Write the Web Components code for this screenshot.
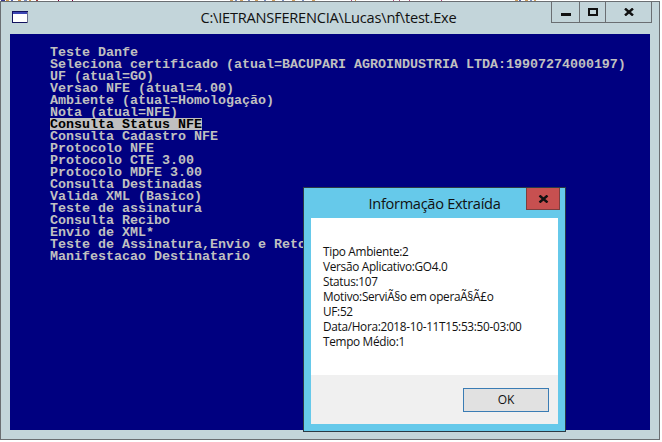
<!DOCTYPE html>
<html>
<head>
<meta charset="utf-8">
<title>test.Exe</title>
<style>
html, body { margin: 0; padding: 0; background: #fff; }
body { width: 662px; height: 442px; overflow: hidden; }
</style>
</head>
<body>
<top-strip></top-strip>
<console-window title-text="C:\IETRANSFERENCIA\Lucas\nf\test.Exe">
  <menu-line>Teste Danfe</menu-line>
  <menu-line>Seleciona certificado (atual=BACUPARI AGROINDUSTRIA LTDA:19907274000197)</menu-line>
  <menu-line>UF (atual=GO)</menu-line>
  <menu-line>Versao NFE (atual=4.00)</menu-line>
  <menu-line>Ambiente (atual=Homologação)</menu-line>
  <menu-line>Nota (atual=NFE)</menu-line>
  <menu-line selected>Consulta Status NFE</menu-line>
  <menu-line>Consulta Cadastro NFE</menu-line>
  <menu-line>Protocolo NFE</menu-line>
  <menu-line>Protocolo CTE 3.00</menu-line>
  <menu-line>Protocolo MDFE 3.00</menu-line>
  <menu-line>Consulta Destinadas</menu-line>
  <menu-line>Valida XML (Basico)</menu-line>
  <menu-line>Teste de assinatura</menu-line>
  <menu-line>Consulta Recibo</menu-line>
  <menu-line>Envio de XML*</menu-line>
  <menu-line>Teste de Assinatura,Envio e Retorno</menu-line>
  <menu-line>Manifestacao Destinatario</menu-line>
  <message-box slot="dialog" title-text="Informação Extraída">
    <div>Tipo Ambiente:2</div>
    <div>Versão Aplicativo:GO4.0</div>
    <div>Status:107</div>
    <div>Motivo:ServiÃ§o em operaÃ§Ã£o</div>
    <div>UF:52</div>
    <div>Data/Hora:2018-10-11T15:53:50-03:00</div>
    <div>Tempo Médio:1</div>
  </message-box>
</console-window>

<script>
(function() {

  const UI_FONT = '"Open Sans", "Noto Sans", sans-serif';

  // bits of the windows behind, they show in the first pixel row
  const STRIP_MARKS = [
    [1, 4, '#3a3a90'], [6, 3, '#d09a50'], [11, 2, '#5a6ab0'], [18, 3, '#c89050'],
    [24, 3, '#7a90c0'], [29, 2, '#d09a50'], [36, 2, '#a04040'],
    [58, 1, '#800040'], [72, 1, '#800040'],
    [230, 3, '#d0a060'], [235, 2, '#7a90c0'], [240, 3, '#d0a060'], [248, 2, '#7a90c0'],
    [255, 3, '#d0a060'], [264, 2, '#7a90c0'], [272, 3, '#d0a060'], [282, 2, '#7a90c0'],
    [292, 3, '#d0a060'], [302, 2, '#7a90c0'], [312, 3, '#d0a060'],
    [351, 1, '#b05080'], [355, 1, '#d09a50'],
    [393, 1, '#b05080'], [399, 1, '#b05080'], [409, 1, '#b05080'], [441, 1, '#b05080'],
    [515, 3, '#d0a060'], [519, 2, '#5a6ab0'], [525, 3, '#d0a060'], [530, 2, '#7a90c0'], [534, 2, '#d0a060']
  ];

  class TopStrip extends HTMLElement {
    constructor() {
      super();
      this.attachShadow({mode: 'open'});
      let stops = STRIP_MARKS.map(([x, w, c]) =>
        `#fff ${x}px, ${c} ${x}px, ${c} ${x + w}px, #fff ${x + w}px`).join(', ');
      this.shadowRoot.innerHTML = `<style>
:host {
  display: block;
  height: 1px;
  background: linear-gradient(to right, ${stops});
}
</style>`;
    }
  }

  class ConsoleWindow extends HTMLElement {
    constructor() {
      super();
      this.attachShadow({mode: 'open'});
      this.shadowRoot.innerHTML = `
<style>
:host {
  display: block;
  position: relative;
  box-sizing: border-box;
  width: 660px;
  height: 439px;
  background: #c3d5da;
  border: 1px solid #6a6e72;
}
.bar {
  height: 32px;
  display: flex;
  align-items: flex-start;
}
.icon {
  margin: 9px 0 0 11px;
  width: 16px;
  height: 12px;
  flex: none;
}
.title {
  flex: 1;
  margin-top: 4px;
  text-align: center;
  font: 14.6px/22px ${UI_FONT};
  color: #111;
  padding-left: 78px;
  letter-spacing: -0.22px;
}
.buttons {
  display: flex;
  box-sizing: border-box;
  height: 21px;
  margin-right: 7px;
  border: 1px solid #6a6e72;
  border-top: 0;
  flex: none;
}
.buttons div {
  display: flex;
  align-items: center;
  justify-content: center;
  box-sizing: border-box;
  height: 100%;
}
.buttons div + div { border-left: 1px solid #6a6e72; }
.min { width: 27px; }
.min svg { margin-top: 5px; }
.max { width: 26px; }
.close { width: 46px; }
.screen {
  margin: 0 9px 9px 9px;
  height: 396px;
  box-sizing: border-box;
  background: #000080;
  padding: 12px 0 0 40px;
}
</style>
<div class="bar">
  <svg class="icon" viewBox="0 0 16 12">
    <rect x="0.5" y="0.5" width="15" height="11" fill="#fff" stroke="#12125e"/>
    <rect x="1" y="1" width="14" height="2" fill="#3c46b4"/>
    <rect x="15" y="1" width="1" height="11" fill="#6a6e8c"/>
  </svg>
  <div class="title"></div>
  <div class="buttons">
    <div class="min"><svg width="10" height="3"><rect width="10" height="3" fill="#111"/></svg></div>
    <div class="max"><svg width="10" height="8"><rect x="1" y="1" width="8" height="6" fill="none" stroke="#111" stroke-width="2"/></svg></div>
    <div class="close"><svg width="10" height="8"><path d="M1 0.5 9 7.5M9 0.5 1 7.5" stroke="#111" stroke-width="2.4" fill="none"/></svg></div>
  </div>
</div>
<div class="screen"><slot></slot></div>
<slot name="dialog"></slot>
`;
      this.shadowRoot.querySelector('.title').textContent = this.getAttribute('title-text');
    }
  }

  class MenuLine extends HTMLElement {
    constructor() {
      super();
      this.attachShadow({mode: 'open'});
      this.shadowRoot.innerHTML = `
<style>
:host {
  display: block;
  height: 12px;
  font: bold 13.33px/14px "Liberation Mono", monospace;
  color: #c0c0c0;
}
:host([selected]) span {
  background: #c0c0c0;
  color: #000;
}
span { display: inline-block; height: 12px; white-space: pre; vertical-align: top; }
</style>
<span><slot></slot></span>
`;
    }
  }

  class MessageBox extends HTMLElement {
    constructor() {
      super();
      this.attachShadow({mode: 'open'});
      this.shadowRoot.innerHTML = `
<style>
:host {
  display: flex;
  flex-direction: column;
  position: absolute;
  left: 302px;
  top: 185px;
  box-sizing: border-box;
  width: 263px;
  height: 245px;
  background: #66c9ea;
  border: 1px solid #2b3a44;
  padding: 0 7px 7px 7px;
}
.head {
  height: 30px;
  position: relative;
  flex: none;
  text-align: center;
  font: 14.6px/30px ${UI_FONT};
  color: #111;
  letter-spacing: -0.3px;
}
.close {
  position: absolute;
  right: -2px;
  top: 0;
  width: 34px;
  height: 22px;
  box-sizing: border-box;
  background: #c75050;
  border: 1px solid #7b3f3f;
  border-top: 0;
  display: flex;
  align-items: center;
  justify-content: center;
}
.body {
  flex: 1;
  background: #fff;
  padding: 26px 0 0 12px;
  font: 11.8px/15px ${UI_FONT};
  color: #111;
  letter-spacing: -0.3px;
}
.foot {
  flex: none;
  height: 49px;
  box-sizing: border-box;
  background: #f0f0f0;
  display: flex;
  justify-content: flex-end;
  align-items: flex-start;
  padding: 13px 9px 0 0;
}
.ok {
  width: 86px;
  height: 24px;
  box-sizing: border-box;
  background: #e1e1e1;
  border: 1px solid #3a7cb4;
  font: 12px/22px ${UI_FONT};
  color: #111;
  text-align: center;
}
</style>
<div class="head"><span class="t"></span>
  <div class="close"><svg width="11" height="8"><path d="M1.5 0.5 9.5 7.5M9.5 0.5 1.5 7.5" stroke="#111" stroke-width="2.4" fill="none"/></svg></div>
</div>
<div class="body"><slot></slot></div>
<div class="foot"><div class="ok">OK</div></div>
`;
      this.shadowRoot.querySelector('.t').textContent = this.getAttribute('title-text');
    }
  }

  window.customElements.define('top-strip', TopStrip);
  window.customElements.define('console-window', ConsoleWindow);
  window.customElements.define('menu-line', MenuLine);
  window.customElements.define('message-box', MessageBox);

}());
</script>
</body>
</html>
